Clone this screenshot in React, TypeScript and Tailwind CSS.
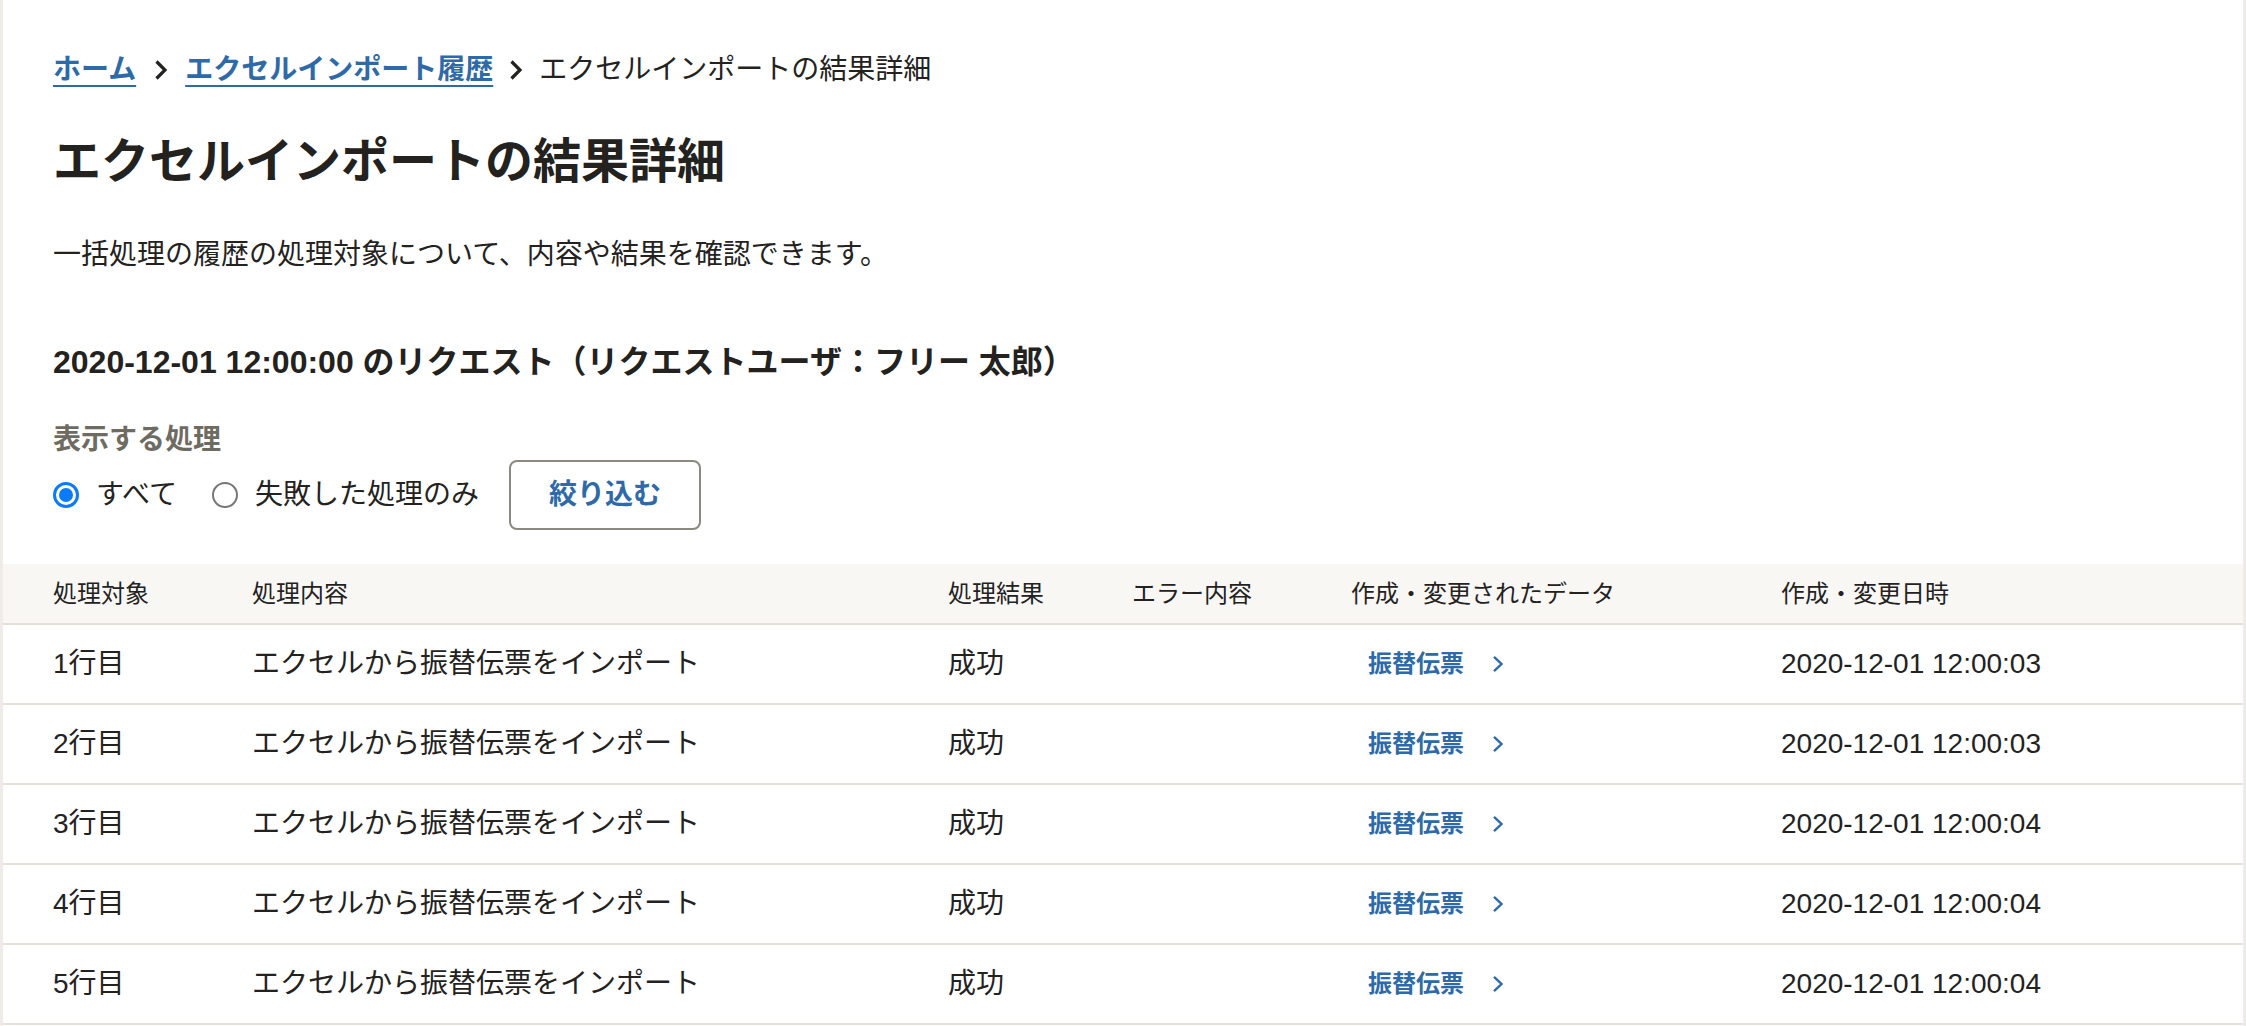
import React from "react";

const rows = [
  { target: "1行目", time: "2020-12-01 12:00:03" },
  { target: "2行目", time: "2020-12-01 12:00:03" },
  { target: "3行目", time: "2020-12-01 12:00:04" },
  { target: "4行目", time: "2020-12-01 12:00:04" },
  { target: "5行目", time: "2020-12-01 12:00:04" },
];

const cols = "grid grid-cols-[249px_696px_184px_219px_430px_1fr]";

function Crumb({ className }: { className: string }) {
  return (
    <svg className={`${className} w-[14px] h-[22px] shrink-0`} viewBox="0 0 14 22" fill="none">
      <path d="M2.5 2.5 L11 11 L2.5 19.5" stroke="#23221e" strokeWidth="3.2" />
    </svg>
  );
}

function LinkChevron() {
  return (
    <svg className="ml-[27px] w-[14px] h-[18px]" viewBox="0 0 14 18" fill="none">
      <path d="M3 1.8 L10.5 9 L3 16.2" stroke="#2e6aa8" strokeWidth="2.4" />
    </svg>
  );
}

export default function App() {
  return (
    <div className="min-h-screen bg-[#efece8] px-[3px] font-['Liberation_Sans','Noto_Sans_CJK_JP',sans-serif] text-[#23221e]">
      <div className="bg-white min-h-[1026px]">
        <div className="pl-[50px] pt-[50px]">
          <nav className="flex items-center h-[40px] text-[28px] leading-[40px]">
            <a className="font-bold text-[#2e6aa8] underline underline-offset-[6px] decoration-2">ホーム</a>
            <Crumb className="ml-[18px] mr-[17px]" />
            <a className="font-bold text-[#2e6aa8] underline underline-offset-[6px] decoration-2">エクセルインポート履歴</a>
            <Crumb className="ml-[16px] mr-[16px]" />
            <span>エクセルインポートの結果詳細</span>
          </nav>
          <h1 className="mt-[40px] text-[48px] leading-[64px] font-bold">エクセルインポートの結果詳細</h1>
          <p className="mt-[39px] text-[28px] leading-[44px]">一括処理の履歴の処理対象について、内容や結果を確認できます。</p>
          <h2 className="mt-[61px] text-[32px] leading-[48px] font-bold">
            2020-12-01 12:00:00 のリクエスト（リクエストユーザ：フリー 太郎）
          </h2>
          <div className="mt-[34px] text-[28px] leading-[40px] font-bold text-[#6e6b62]">表示する処理</div>
          <div className="flex items-center h-[70px]">
            <span className="w-[26px] h-[26px] rounded-full border-[3px] border-[#0a7bff] flex items-center justify-center">
              <span className="w-[14px] h-[14px] rounded-full bg-[#0a7bff]" />
            </span>
            <span className="ml-[17px] text-[28px] leading-[40px]">すべて</span>
            <span className="ml-[35px] w-[26px] h-[26px] rounded-full border-2 border-[#767676]" />
            <span className="ml-[17px] text-[28px] leading-[40px]">失敗した処理のみ</span>
            <button className="ml-[30px] h-[70px] px-[38px] rounded-[8px] border-2 border-[#8c8981] bg-white text-[28px] font-bold text-[#2e6aa8]">
              絞り込む
            </button>
          </div>
        </div>

        <div className="mt-[34px]">
          <div className={`${cols} h-[61px] items-center bg-[#f9f7f4] border-b-2 border-[#e3dfd8] text-[24px] leading-[34px]`}>
            <div className="pl-[50px]">処理対象</div>
            <div>処理内容</div>
            <div>処理結果</div>
            <div>エラー内容</div>
            <div>作成・変更されたデータ</div>
            <div>作成・変更日時</div>
          </div>
          {rows.map((r) => (
            <div key={r.target} className={`${cols} h-[80px] items-center border-b-2 border-[#e6e2da] text-[28px] leading-[40px]`}>
              <div className="pl-[50px]">{r.target}</div>
              <div>エクセルから振替伝票をインポート</div>
              <div>成功</div>
              <div></div>
              <div className="flex items-center pl-[17px]">
                <a className="text-[24px] font-bold text-[#2e6aa8]">振替伝票</a>
                <LinkChevron />
              </div>
              <div>{r.time}</div>
            </div>
          ))}
        </div>
      </div>
    </div>
  );
}
